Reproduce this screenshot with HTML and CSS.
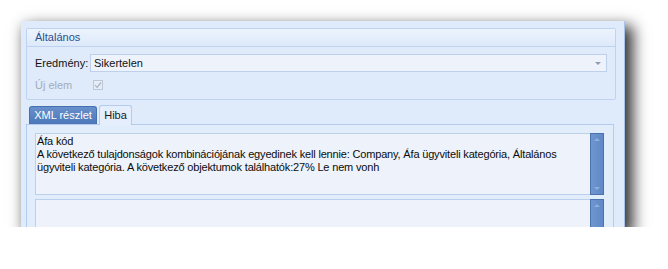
FILE: index.html
```html
<!DOCTYPE html>
<html lang="hu">
<head>
<meta charset="utf-8">
<link rel="stylesheet" href="styles.css">
</head>
<body>
<div class="window">
  <div class="group">
    <div class="group-head">Általános</div>
    <div class="group-body">
      <div class="row">
        <span class="label">Eredmény:</span>
        <div class="combo"><span>Sikertelen</span><span class="arrow"></span></div>
      </div>
      <div class="row row2">
        <span class="label disabled">Új elem</span>
        <span class="check"><svg width="8" height="8" viewBox="0 0 8 8"><path d="M1 4.2 L3.1 6.3 L7 1.5" fill="none" stroke="#a9b3c2" stroke-width="1.2"/></svg></span>
      </div>
    </div>
  </div>
  <div class="tabs">
    <div class="tab tab-blue">XML részlet</div>
    <div class="tab tab-active">Hiba</div>
  </div>
  <div class="panel">
    <div class="memo memo1">
      <div class="memo-text">Áfa kód<br>A következő tulajdonságok kombinációjának egyedinek kell lennie: Company, Áfa ügyviteli kategória, Általános ügyviteli kategória. A következő objektumok találhatók:27% Le nem vonh</div>
      <div class="vscroll"><span class="up"></span><span class="down"></span></div>
    </div>
    <div class="memo memo2">
      <div class="memo-text"></div>
      <div class="vscroll"><span class="up"></span></div>
    </div>
  </div>
</div>
</body>
</html>
```
FILE: styles.css
```css
html, body {
  margin: 0;
  background: #ffffff;
}
body {
  padding: 21px 0 0 21px;
  font-family: "Liberation Sans", Arial, sans-serif;
  font-size: 11px;
  color: #111111;
}
.window {
  width: 604px;
  height: 206px;
  box-sizing: border-box;
  background: #dfeafb;
  border-right: 1px solid #a8c2e8;
  padding: 7px 8px 0 5px;
  display: flex;
  flex-direction: column;
  overflow: hidden;
  box-shadow: 6px 7px 14px 2px rgba(0, 0, 0, 0.8);
}
.group {
  height: 72px;
  box-sizing: border-box;
  border: 1px solid #bed3f0;
  border-radius: 2px;
  flex: none;
}
.group-head {
  height: 17px;
  line-height: 17px;
  border-bottom: 1px solid #bed3f0;
  background: linear-gradient(#ecf3fd, #dde9fa);
  padding-left: 8px;
  color: #2c4f8d;
}
.group-body {
  padding: 7px 8px 0 8px;
}
.row {
  display: flex;
  align-items: center;
}
.label {
  width: 55px;
  flex: none;
}
.label.disabled {
  color: #a3acb9;
  width: 58px;
}
.combo {
  flex: 1;
  height: 18px;
  box-sizing: border-box;
  border: 1px solid #bdd0ec;
  background: #eef2fa;
  display: flex;
  align-items: center;
  justify-content: space-between;
  padding: 0 5px 0 3px;
  color: #111;
}
.arrow {
  width: 0;
  height: 0;
  border-left: 3px solid transparent;
  border-right: 3px solid transparent;
  border-top: 3px solid #8e9bb0;
}
.row2 {
  margin-top: 7px;
}
.check {
  width: 10px;
  height: 10px;
  box-sizing: border-box;
  border: 1px solid #bcc6d4;
  background: #e6edf8;
  display: flex;
  align-items: center;
  justify-content: center;
}
.tabs {
  display: flex;
  align-items: flex-end;
  gap: 2px;
  margin-top: 5px;
  padding-left: 3px;
  height: 19px;
  flex: none;
}
.tab {
  box-sizing: border-box;
  border-radius: 3px 3px 0 0;
  text-align: center;
}
.tab-blue {
  width: 68px;
  height: 18px;
  line-height: 17px;
  color: #ffffff;
  background: linear-gradient(#6890cc, #4b77b9);
  border: 1px solid #4570b0;
  border-bottom: none;
}
.tab-active {
  width: 33px;
  height: 20px;
  line-height: 19px;
  color: #1b1b1b;
  background: #e4eefc;
  border: 1px solid #b3cbed;
  border-bottom: none;
  margin-bottom: -1px;
  position: relative;
}
.panel {
  flex: 1;
  margin-right: 2px;
  border: 1px solid #b3cbed;
  border-bottom: none;
  background: #e2edfc;
  padding: 8px 9px 0 8px;
  display: flex;
  flex-direction: column;
  gap: 4px;
}
.memo {
  display: flex;
  border: 1px solid #bcd0ec;
  background: #eef2fa;
  flex: none;
}
.memo1 {
  height: 62px;
  box-sizing: border-box;
}
.memo2 {
  height: 40px;
  box-sizing: border-box;
}
.memo-text {
  flex: 1;
  padding: 1px 0 0 1px;
  line-height: 13px;
  letter-spacing: -0.17px;
  color: #0c0c0c;
}
.vscroll {
  width: 14px;
  box-sizing: border-box;
  margin: -1px -1px -1px 0;
  background: linear-gradient(90deg, #6f96cf, #5f88c6);
  border: 1px solid #4a72ad;
  display: flex;
  flex-direction: column;
  justify-content: space-between;
  align-items: center;
  padding: 4px 0;
}
.up {
  width: 0;
  height: 0;
  border-left: 3px solid transparent;
  border-right: 3px solid transparent;
  border-bottom: 3px solid #8fb0de;
}
.down {
  width: 0;
  height: 0;
  border-left: 3px solid transparent;
  border-right: 3px solid transparent;
  border-top: 3px solid #8fb0de;
}
```
